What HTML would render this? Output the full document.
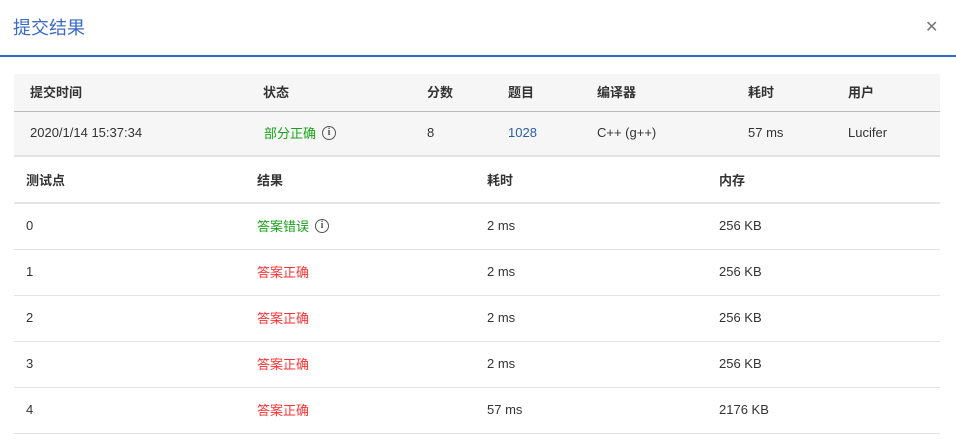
<!DOCTYPE html>
<html><head><meta charset="utf-8"><style>
*{margin:0;padding:0;box-sizing:border-box}
body{width:956px;height:440px;background:#fff;font-family:"Liberation Sans","Noto Sans CJK SC",sans-serif;font-size:13px;color:#333;position:relative;overflow:hidden}
.t{position:absolute;white-space:nowrap;line-height:16px}
.title{left:13px;top:18px;font-size:18px;line-height:20px;color:#3b6cc4}
.close{left:925px;top:20px;font-size:16px;color:#777}
.line{position:absolute;left:0;top:55px;width:956px;height:2px;background:#3b6cc4}
.sum{position:absolute;left:14px;top:74px;width:926px;height:83px;background:#f6f6f6;border-bottom:2px solid #e3e3e8}
.sum .sep{position:absolute;left:0;top:37px;width:926px;height:1px;background:#bbb}
.hl{position:absolute;left:14px;width:926px;height:1px;background:#e3e3e8}
b{font-weight:bold}
.g{color:#19a319}.r{color:#f33}.bl{color:#2a5da8}
.c{display:inline-block;font-family:"Noto Sans CJK SC",sans-serif;line-height:16px;height:16px;vertical-align:top}
.i{display:inline-block;width:14px;height:14px;border:1.3px solid #555;border-radius:50%;font-size:10px;line-height:11px;text-align:center;color:#555;font-weight:bold;vertical-align:top;margin-top:1px;margin-left:6px;font-family:"Liberation Serif",serif}
</style></head><body>
<div class="t title">提交结果</div>
<div class="t close">✕</div>
<div class="line"></div>
<div class="sum"><div class="sep"></div></div>
<div class="t" style="top:85px;left:30px"><b>提交时间</b></div>
<div class="t" style="top:85px;left:263px"><b>状态</b></div>
<div class="t" style="top:85px;left:427px"><b>分数</b></div>
<div class="t" style="top:85px;left:508px"><b>题目</b></div>
<div class="t" style="top:85px;left:597px"><b>编译器</b></div>
<div class="t" style="top:85px;left:748px"><b>耗时</b></div>
<div class="t" style="top:85px;left:848px"><b>用户</b></div>
<div class="t" style="top:125px;left:30px">2020/1/14 15:37:34</div>
<div class="t g" style="top:125px;left:264px"><span class="c">部分正确</span><span class="i">i</span></div>
<div class="t" style="top:125px;left:427px">8</div>
<div class="t bl" style="top:125px;left:508px">1028</div>
<div class="t" style="top:125px;left:597px">C++ (g++)</div>
<div class="t" style="top:125px;left:748px">57 ms</div>
<div class="t" style="top:125px;left:848px">Lucifer</div>

<div class="t" style="top:173px;left:26px"><b>测试点</b></div>
<div class="t" style="top:173px;left:257px"><b>结果</b></div>
<div class="t" style="top:173px;left:487px"><b>耗时</b></div>
<div class="t" style="top:173px;left:719px"><b>内存</b></div>
<div class="hl" style="top:202px;height:2px"></div>
<div class="hl" style="top:249px"></div>
<div class="hl" style="top:295px"></div>
<div class="hl" style="top:341px"></div>
<div class="hl" style="top:387px"></div>
<div class="hl" style="top:433px"></div>

<div class="t" style="top:218px;left:26px">0</div><div class="t g" style="top:218px;left:257px"><span class="c">答案错误</span><span class="i">i</span></div><div class="t" style="top:218px;left:487px">2 ms</div><div class="t" style="top:218px;left:719px">256 KB</div>
<div class="t" style="top:264px;left:26px">1</div><div class="t r" style="top:264px;left:257px"><span class="c">答案正确</span></div><div class="t" style="top:264px;left:487px">2 ms</div><div class="t" style="top:264px;left:719px">256 KB</div>
<div class="t" style="top:310px;left:26px">2</div><div class="t r" style="top:310px;left:257px"><span class="c">答案正确</span></div><div class="t" style="top:310px;left:487px">2 ms</div><div class="t" style="top:310px;left:719px">256 KB</div>
<div class="t" style="top:356px;left:26px">3</div><div class="t r" style="top:356px;left:257px"><span class="c">答案正确</span></div><div class="t" style="top:356px;left:487px">2 ms</div><div class="t" style="top:356px;left:719px">256 KB</div>
<div class="t" style="top:402px;left:26px">4</div><div class="t r" style="top:402px;left:257px"><span class="c">答案正确</span></div><div class="t" style="top:402px;left:487px">57 ms</div><div class="t" style="top:402px;left:719px">2176 KB</div>
</body></html>
